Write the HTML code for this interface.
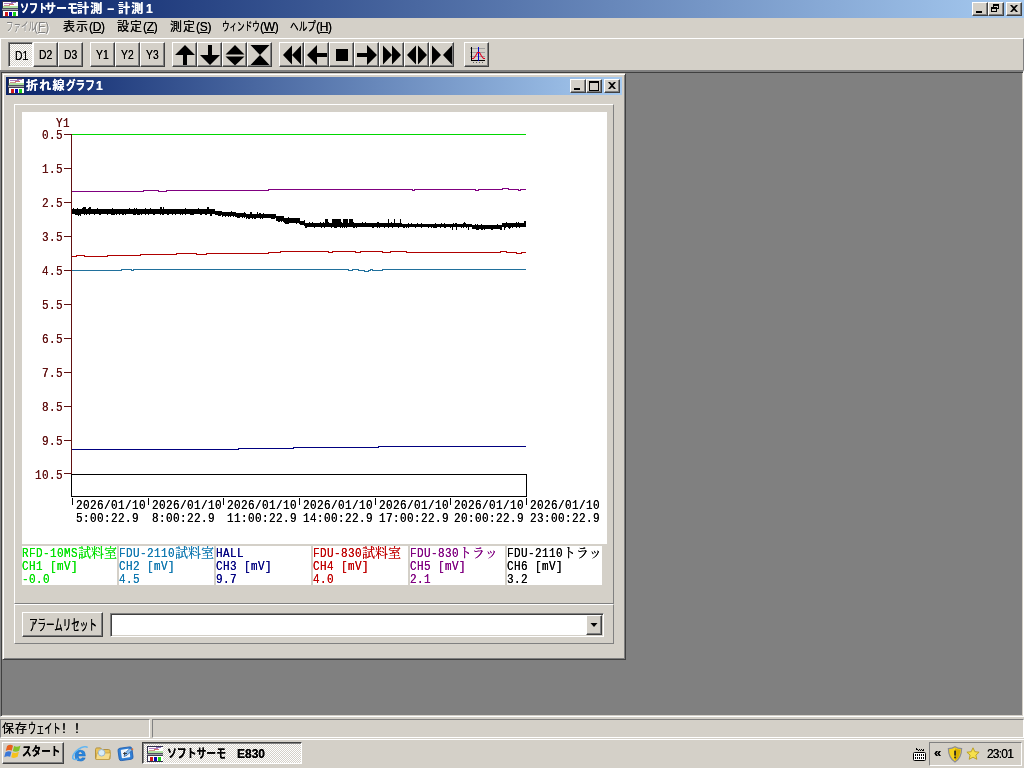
<!DOCTYPE html>
<html lang="ja">
<head>
<meta charset="utf-8">
<title>ソフトサーモ計測 − 計測1</title>
<style>
html,body{margin:0;padding:0}
body{width:1024px;height:768px;overflow:hidden;background:#d4d0c8;position:relative;color:#000;
 font-family:"Liberation Sans","Noto Sans CJK JP",sans-serif;font-size:12px;line-height:12px}
div,span{box-sizing:border-box}
.a{position:absolute;white-space:nowrap}
.ui,.mono{will-change:transform;text-shadow:0 0 0 currentColor}
.ui{font-family:"Liberation Sans","Noto Sans CJK JP",sans-serif;font-size:12px;line-height:14px}
.cap{background:linear-gradient(to right,#0a246a 0%,#a6caf0 100%);color:#fff;font-weight:bold}
.raised{background:#d4d0c8;border:1px solid;border-color:#fff #404040 #404040 #fff;box-shadow:inset -1px -1px 0 #808080,inset 1px 1px 0 #d4d0c8}
.tbtn{background:#d4d0c8;border:1px solid;border-color:#fff #404040 #404040 #fff;box-shadow:inset -1px -1px 0 #808080}
.sunk{border:1px solid;border-color:#808080 #fff #fff #808080;box-shadow:inset 1px 1px 0 #404040,inset -1px -1px 0 #d4d0c8}
.dither{background-color:#fff;background-image:linear-gradient(45deg,#d4d0c8 25%,transparent 25%,transparent 75%,#d4d0c8 75%),linear-gradient(45deg,#d4d0c8 25%,transparent 25%,transparent 75%,#d4d0c8 75%);background-size:2px 2px;background-position:0 0,1px 1px}
.mono{font-family:"Liberation Mono","Noto Serif CJK JP","Noto Serif CJK SC",monospace;font-size:11px;line-height:10.8333px;letter-spacing:0.4px;transform:scaleY(1.2);transform-origin:0 0}
.mono b{font-weight:normal;letter-spacing:0;font-size:13px;line-height:0;display:inline-block;transform:scaleY(.8333);transform-origin:0 50%;position:relative;top:1px}
u{text-decoration:underline}
.sx{display:inline-block;transform-origin:0 50%}
.tt{color:#fff;font-weight:bold}
.par{letter-spacing:-0.3px}
svg{position:absolute;left:0;top:0;overflow:visible}
</style>
</head>
<body>

<!-- ===== main title bar ===== -->
<div class="a cap" style="left:0;top:0;width:1024px;height:18px"></div>
<svg class="a" style="left:2px;top:1px" width="16" height="16" viewBox="0 0 16 16" shape-rendering="crispEdges">
 <g><rect x="0" y="0" width="16" height="16" fill="#30304c"/>
 <rect x="1" y="1" width="15" height="6" fill="#fff"/>
 <rect x="2" y="2" width="9" height="1" fill="#b080c0"/><rect x="9" y="1" width="5" height="1" fill="#9070c0"/>
 <rect x="2" y="4" width="6" height="1" fill="#d09090"/><rect x="7" y="3" width="5" height="1" fill="#d07070"/>
 <rect x="1" y="5" width="15" height="2" fill="#b0e0a0"/>
 <rect x="0" y="7" width="16" height="1" fill="#505060"/>
 <rect x="0" y="8" width="16" height="1" fill="#a0a0a8"/>
 <rect x="0" y="9" width="16" height="1" fill="#404050"/>
 <rect x="1" y="10" width="15" height="5" fill="#fff"/>
 <rect x="3" y="11" width="3" height="4" fill="#d01818"/>
 <rect x="7" y="11" width="3" height="4" fill="#0808b0"/>
 <rect x="11" y="11" width="3" height="4" fill="#18d018"/></g>
</svg>
<div class="a ui tt" style="left:20px;top:2px"><span class="sx" id="t1" style="transform:scaleX(.76)">ソフト</span><span class="a sx" id="t2" style="left:25px;transform:scaleX(.92)">サーモ</span><span class="a" id="t3" style="left:57px;letter-spacing:1.3px">計測</span><span class="a" id="t4" style="left:87px">−</span><span class="a" id="t5" style="left:98px;letter-spacing:1.3px">計測</span><span class="a" id="t6" style="left:126px">1</span></div>

<!-- caption buttons -->
<div class="a raised" style="left:972px;top:2px;width:16px;height:14px"></div>
<div class="a raised" style="left:988px;top:2px;width:16px;height:14px"></div>
<div class="a raised" style="left:1006px;top:2px;width:16px;height:14px"></div>
<svg width="1024" height="18" shape-rendering="crispEdges">
 <rect x="976" y="11" width="6" height="2" fill="#000"/>
 <path d="M993 4h6v2h-6zM993 6h1v2h-1zM998 6h1v3h-1zM997 8h2v1h-2zM991 7h6v2h-6zM991 9h1v3h-1zM996 9h1v3h-1zM991 11h6v1h-6z" fill="#000"/>
 <path d="M1010 5h2l2 2 2-2h2l-3 3.5 3 3.5h-2l-2-2-2 2h-2l3-3.5z" fill="#000" shape-rendering="auto"/>
</svg>

<!-- ===== menu bar ===== -->
<div class="a ui" style="left:6px;top:20px;color:#808080;text-shadow:1px 1px 0 #fff"><span class="sx" id="m1" style="transform:scaleX(.62)">ファイル</span><span class="a" id="m1b" style="left:28px">(<u>F</u>)</span></div>
<div class="a ui" style="left:63px;top:20px;letter-spacing:1px" id="m2">表示<span class="par">(<u>D</u>)</span></div>
<div class="a ui" style="left:117px;top:20px;letter-spacing:1px" id="m3">設定<span class="par">(<u>Z</u>)</span></div>
<div class="a ui" style="left:170px;top:20px;letter-spacing:1px" id="m4">測定<span class="par">(<u>S</u>)</span></div>
<div class="a ui" style="left:222px;top:20px"><span class="sx" id="m5" style="transform:scaleX(.63)">ウィンドウ</span><span class="a par" id="m5b" style="left:38px">(<u>W</u>)</span></div>
<div class="a ui" style="left:290px;top:20px"><span class="sx" id="m6" style="transform:scaleX(.72)">ヘルプ</span><span class="a par" id="m6b" style="left:26px">(<u>H</u>)</span></div>

<!-- ===== toolbar ===== -->
<div class="a" style="left:0;top:38px;width:1024px;height:32px;border-top:1px solid #fff;border-left:1px solid #fff;border-right:1px solid #808080"></div>
<!--TB0-->
<div class="a dither" style="left:8px;top:42px;width:25px;height:25px;border:1px solid;border-color:#808080 #fff #fff #808080;box-shadow:inset 1px 1px 0 #404040"></div>
<div class="a ui" style="left:9px;top:49px;width:25px;text-align:center"><span class="sx" style="transform:scaleX(.86);transform-origin:50% 50%">D1</span></div>
<div class="a tbtn" style="left:33px;top:42px;width:25px;height:25px"></div>
<div class="a ui" style="left:34px;top:48px;width:24px;text-align:center"><span class="sx" style="transform:scaleX(.86);transform-origin:50% 50%">D2</span></div>
<div class="a tbtn" style="left:58px;top:42px;width:25px;height:25px"></div>
<div class="a ui" style="left:59px;top:48px;width:24px;text-align:center"><span class="sx" style="transform:scaleX(.86);transform-origin:50% 50%">D3</span></div>
<div class="a tbtn" style="left:90px;top:42px;width:25px;height:25px"></div>
<div class="a ui" style="left:90px;top:48px;width:24px;text-align:center"><span class="sx" style="transform:scaleX(.86);transform-origin:50% 50%">Y1</span></div>
<div class="a tbtn" style="left:115px;top:42px;width:25px;height:25px"></div>
<div class="a ui" style="left:115px;top:48px;width:24px;text-align:center"><span class="sx" style="transform:scaleX(.86);transform-origin:50% 50%">Y2</span></div>
<div class="a tbtn" style="left:140px;top:42px;width:25px;height:25px"></div>
<div class="a ui" style="left:140px;top:48px;width:24px;text-align:center"><span class="sx" style="transform:scaleX(.86);transform-origin:50% 50%">Y3</span></div>
<div class="a tbtn" style="left:172px;top:42px;width:25px;height:25px"></div>
<div class="a tbtn" style="left:197px;top:42px;width:25px;height:25px"></div>
<div class="a tbtn" style="left:222px;top:42px;width:25px;height:25px"></div>
<div class="a tbtn" style="left:247px;top:42px;width:25px;height:25px"></div>
<div class="a tbtn" style="left:279px;top:42px;width:25px;height:25px"></div>
<div class="a tbtn" style="left:304px;top:42px;width:25px;height:25px"></div>
<div class="a tbtn" style="left:329px;top:42px;width:25px;height:25px"></div>
<div class="a tbtn" style="left:354px;top:42px;width:25px;height:25px"></div>
<div class="a tbtn" style="left:379px;top:42px;width:25px;height:25px"></div>
<div class="a tbtn" style="left:404px;top:42px;width:25px;height:25px"></div>
<div class="a tbtn" style="left:429px;top:42px;width:25px;height:25px"></div>
<div class="a tbtn" style="left:464px;top:42px;width:25px;height:25px"></div>
<svg width="1024" height="70">
<path d="M185 45L195 55H187V65H183V55H175Z" fill="#000"/>
<path d="M210 65L220 55H212V45H208V55H200Z" fill="#000"/>
<path d="M235 45L244.5 54.5H225.5Z M235 65.5L244.5 56.5H225.5Z" fill="#000"/>
<path d="M250.5 45H269.5L260 55L269.5 65H250.5L260 55Z" fill="#000"/>
<path d="M283 55L292 45.5V64.5ZM292 55L301 45.5V64.5Z" fill="#000"/>
<path d="M307 55L317 45V53H327V57H317V65Z" fill="#000"/>
<path d="M336 49H348V61H336Z" fill="#000"/>
<path d="M377 55L367 45V53H357V57H367V65Z" fill="#000"/>
<path d="M392 55L383 45.5V64.5ZM401 55L392 45.5V64.5Z" fill="#000"/>
<path d="M407 55L416 45.5V64.5ZM427 55L418 45.5V64.5Z" fill="#000"/>
<path d="M441 55L432 45.5V64.5ZM443 55L452 45.5V64.5Z" fill="#000"/>
<g shape-rendering="crispEdges">
<rect x="470" y="48" width="15" height="1" fill="#a0a0a0"/>
<rect x="470" y="52" width="15" height="1" fill="#a0a0a0"/>
<rect x="470" y="56" width="15" height="1" fill="#a0a0a0"/>
<rect x="471" y="47" width="1" height="14" fill="#000"/>
<rect x="471" y="60" width="14" height="1" fill="#000"/>
<rect x="473" y="62" width="1" height="1" fill="#606060"/>
<rect x="476" y="62" width="1" height="1" fill="#606060"/>
<rect x="479" y="62" width="1" height="1" fill="#606060"/>
<rect x="482" y="62" width="1" height="1" fill="#606060"/>
<rect x="478" y="47" width="1" height="14" fill="#0000d0"/>
</g>
<path d="M472 58.5H473.5L475.5 56L477.5 52.5H479.5L481.5 56L483.5 58.5H485" fill="none" stroke="#e00020" stroke-width="1.1"/>
</svg>
<!--TB1-->

<!-- ===== MDI client ===== -->
<div class="a" style="left:0;top:70px;width:1024px;height:647px;background:#808080;border-style:solid;border-width:2px 1px 1px 1px;border-color:#808080 #fff #fff #808080;box-shadow:inset 1px 1px 0 #404040,inset -1px -1px 0 #d4d0c8"></div>
<!--CH0-->
<div class="a" style="left:2px;top:73px;width:624px;height:587px;background:#d4d0c8;border:1px solid;border-color:#d4d0c8 #404040 #404040 #d4d0c8;box-shadow:inset 1px 1px 0 #fff,inset -1px -1px 0 #808080"></div>
<div class="a cap" style="left:6px;top:77px;width:616px;height:18px"></div>
<svg class="a" style="left:8px;top:78px" width="16" height="16" viewBox="0 0 16 16" shape-rendering="crispEdges"><g><rect x="0" y="0" width="16" height="16" fill="#30304c"/>
 <rect x="1" y="1" width="15" height="6" fill="#fff"/>
 <rect x="2" y="2" width="9" height="1" fill="#b080c0"/><rect x="9" y="1" width="5" height="1" fill="#9070c0"/>
 <rect x="2" y="4" width="6" height="1" fill="#d09090"/><rect x="7" y="3" width="5" height="1" fill="#d07070"/>
 <rect x="1" y="5" width="15" height="2" fill="#b0e0a0"/>
 <rect x="0" y="7" width="16" height="1" fill="#505060"/>
 <rect x="0" y="8" width="16" height="1" fill="#a0a0a8"/>
 <rect x="0" y="9" width="16" height="1" fill="#404050"/>
 <rect x="1" y="10" width="15" height="5" fill="#fff"/>
 <rect x="3" y="11" width="3" height="4" fill="#d01818"/>
 <rect x="7" y="11" width="3" height="4" fill="#0808b0"/>
 <rect x="11" y="11" width="3" height="4" fill="#18d018"/></g></svg>
<div class="a ui tt" style="left:26px;top:79px"><span id="c1" style="letter-spacing:1.3px">折れ線</span><span class="a sx" id="c2" style="left:40px;transform:scaleX(.8)">グラフ</span><span class="a" id="c3" style="left:70px">1</span></div>
<div class="a raised" style="left:570px;top:79px;width:16px;height:14px"></div>
<div class="a raised" style="left:586px;top:79px;width:16px;height:14px"></div>
<div class="a raised" style="left:604px;top:79px;width:16px;height:14px"></div>
<svg width="1024" height="100" shape-rendering="crispEdges"><rect x="574" y="88" width="6" height="2" fill="#000"/><path d="M589 81h10v10h-10zM590 83v7h8v-7z" fill="#000" fill-rule="evenodd"/><path d="M608 82h2l2 2 2-2h2l-3 3.5 3 3.5h-2l-2-2-2 2h-2l3-3.5z" fill="#000" shape-rendering="auto"/></svg>
<div class="a" style="left:14px;top:104px;width:600px;height:500px;border:1px solid;border-color:#fff #808080 #808080 #fff"></div>
<div class="a" style="left:14px;top:604px;width:600px;height:40px;border:1px solid;border-color:#fff #808080 #808080 #fff"></div>
<div class="a" style="left:22px;top:112px;width:585px;height:432px;background:#fff"></div>
<svg width="1024" height="768" shape-rendering="crispEdges">
<rect x="71" y="134" width="1" height="340" fill="#601010"/>
<rect x="64" y="134" width="7" height="1" fill="#601010"/>
<rect x="64" y="168" width="7" height="1" fill="#601010"/>
<rect x="64" y="202" width="7" height="1" fill="#601010"/>
<rect x="64" y="236" width="7" height="1" fill="#601010"/>
<rect x="64" y="270" width="7" height="1" fill="#601010"/>
<rect x="64" y="304" width="7" height="1" fill="#601010"/>
<rect x="64" y="338" width="7" height="1" fill="#601010"/>
<rect x="64" y="372" width="7" height="1" fill="#601010"/>
<rect x="64" y="406" width="7" height="1" fill="#601010"/>
<rect x="64" y="440" width="7" height="1" fill="#601010"/>
<rect x="64" y="473" width="7" height="1" fill="#601010"/>
<path d="M71.5 474.5H526.5V496.5H71.5Z" fill="none" stroke="#000" stroke-width="1"/>
<rect x="72" y="498" width="1" height="7" fill="#000"/>
<rect x="148" y="498" width="1" height="7" fill="#000"/>
<rect x="223" y="498" width="1" height="7" fill="#000"/>
<rect x="299" y="498" width="1" height="7" fill="#000"/>
<rect x="375" y="498" width="1" height="7" fill="#000"/>
<rect x="450" y="498" width="1" height="7" fill="#000"/>
<rect x="526" y="498" width="1" height="7" fill="#000"/>
<path d="M72 134.5H526" fill="none" stroke="#00d800" stroke-width="1"/>
<path d="M72 191.5H100V191.5H143V190.5H158V191.5H166V190.5H268V189.5H412V190.5H414V189.5H475V190.5H478V189.5H502V188.5H508V189.5H518V190.5H520V189.5H526" fill="none" stroke="#800080" stroke-width="1"/>
<path d="M72 256.5H76V255.5H84V256.5H107V255.5H140V254.5H176V253.5H196V254.5H206V253.5H268V252.5H280V251.5H328V252.5H332V251.5H355V252.5H360V251.5H382V252.5H390V251.5H406V252.5H500V251.5H506V252.5H516V253.5H521V252.5H526" fill="none" stroke="#b00000" stroke-width="1"/>
<path d="M72 270.5H121V269.5H131V270.5H133V269.5H348V270.5H352V269.5H358V270.5H364V271.5H368V270.5H370V269.5H372V270.5H382V269.5H526" fill="none" stroke="#20709c" stroke-width="1"/>
<path d="M72 449.5H150V449.5H238V448.5H293V447.5H378V446.5H526" fill="none" stroke="#000080" stroke-width="1"/>
<path d="M72.5 209V214M73.5 208V214M74.5 209V214M75.5 209V215M76.5 209V215M77.5 208V215M78.5 209V216M79.5 209V215M80.5 209V216M81.5 209V214M82.5 208V214M83.5 207V214M84.5 207V215M85.5 207V214M86.5 209V215M87.5 209V214M88.5 208V214M89.5 207V215M90.5 207V214M91.5 209V214M92.5 209V214M93.5 209V214M94.5 209V215M95.5 209V214M96.5 209V214M97.5 208V214M98.5 209V214M99.5 209V215M100.5 209V215M101.5 209V214M102.5 209V214M103.5 209V214M104.5 209V214M105.5 209V214M106.5 209V214M107.5 209V215M108.5 209V214M109.5 209V214M110.5 209V214M111.5 209V215M112.5 208V215M113.5 209V215M114.5 209V215M115.5 209V214M116.5 209V215M117.5 209V214M118.5 209V214M119.5 209V215M120.5 209V214M121.5 209V214M122.5 209V215M123.5 209V215M124.5 209V214M125.5 209V215M126.5 209V214M127.5 209V214M128.5 209V214M129.5 208V214M130.5 209V214M131.5 209V214M132.5 209V214M133.5 209V215M134.5 208V215M135.5 209V215M136.5 208V214M137.5 209V215M138.5 209V215M139.5 209V215M140.5 209V214M141.5 209V215M142.5 209V214M143.5 209V214M144.5 209V214M145.5 208V215M146.5 209V214M147.5 209V214M148.5 209V215M149.5 209V214M150.5 208V214M151.5 209V214M152.5 209V214M153.5 209V215M154.5 209V215M155.5 209V214M156.5 209V214M157.5 209V214M158.5 209V214M159.5 209V214M160.5 207V215M161.5 207V214M162.5 209V215M163.5 207V215M164.5 209V214M165.5 209V214M166.5 209V214M167.5 209V215M168.5 209V215M169.5 209V214M170.5 209V214M171.5 209V214M172.5 209V215M173.5 209V214M174.5 209V214M175.5 209V215M176.5 209V214M177.5 209V214M178.5 209V214M179.5 209V214M180.5 209V215M181.5 209V214M182.5 209V215M183.5 209V214M184.5 209V214M185.5 208V215M186.5 209V214M187.5 209V214M188.5 209V214M189.5 209V214M190.5 209V215M191.5 209V215M192.5 209V215M193.5 209V215M194.5 209V214M195.5 209V214M196.5 209V214M197.5 209V214M198.5 208V214M199.5 209V214M200.5 209V215M201.5 209V215M202.5 209V214M203.5 209V214M204.5 209V214M205.5 209V215M206.5 209V215M207.5 207V214M208.5 207V214M209.5 209V214M210.5 209V216M211.5 209V216M212.5 209V214M213.5 209V214M214.5 209V214M215.5 211V215M216.5 211V215M217.5 211V215M218.5 211V216M219.5 211V216M220.5 211V216M221.5 211V215M222.5 212V217M223.5 212V216M224.5 212V216M225.5 212V217M226.5 212V216M227.5 212V216M228.5 212V217M229.5 212V216M230.5 212V217M231.5 211V216M232.5 212V216M233.5 212V217M234.5 212V216M235.5 212V217M236.5 213V217M237.5 213V218M238.5 213V218M239.5 213V218M240.5 213V217M241.5 213V217M242.5 213V218M243.5 213V217M244.5 212V218M245.5 213V217M246.5 214V219M247.5 214V218M248.5 214V219M249.5 214V219M250.5 212V218M251.5 212V218M252.5 214V219M253.5 214V218M254.5 214V219M255.5 214V219M256.5 214V218M257.5 212V218M258.5 214V218M259.5 213V218M260.5 213V219M261.5 214V218M262.5 214V219M263.5 213V218M264.5 214V218M265.5 214V218M266.5 214V218M267.5 214V218M268.5 214V218M269.5 214V218M270.5 214V218M271.5 214V219M272.5 214V219M273.5 214V219M274.5 214V219M275.5 214V218M276.5 216V221M277.5 216V221M278.5 216V222M279.5 216V222M280.5 216V221M281.5 216V222M282.5 216V221M283.5 216V222M284.5 218V223M285.5 218V224M286.5 218V224M287.5 218V224M288.5 217V224M289.5 218V223M290.5 218V223M291.5 218V223M292.5 218V223M293.5 218V223M294.5 218V223M295.5 218V223M296.5 218V224M297.5 218V223M298.5 218V223M299.5 218V224M300.5 221V225M301.5 221V225M302.5 221V225M303.5 221V225M304.5 220V226M305.5 223V228M306.5 223V228M307.5 223V227M308.5 223V227M309.5 222V227M310.5 223V227M311.5 223V227M312.5 222V227M313.5 223V227M314.5 223V228M315.5 223V227M316.5 223V227M317.5 223V227M318.5 223V227M319.5 223V227M320.5 222V227M321.5 223V228M322.5 223V227M323.5 222V227M324.5 223V228M325.5 219V227M326.5 219V227M327.5 219V227M328.5 222V227M329.5 223V227M330.5 223V227M331.5 223V228M332.5 219V227M333.5 219V227M334.5 219V228M335.5 219V228M336.5 219V228M337.5 219V227M338.5 219V227M339.5 219V227M340.5 219V228M341.5 222V227M342.5 223V228M343.5 219V227M344.5 219V228M345.5 219V227M346.5 219V228M347.5 219V227M348.5 223V227M349.5 219V227M350.5 219V227M351.5 219V227M352.5 219V227M353.5 222V228M354.5 223V228M355.5 223V227M356.5 223V228M357.5 223V227M358.5 223V227M359.5 223V227M360.5 223V227M361.5 223V227M362.5 222V227M363.5 223V227M364.5 223V227M365.5 222V227M366.5 223V227M367.5 223V227M368.5 223V227M369.5 223V227M370.5 223V227M371.5 223V227M372.5 223V228M373.5 223V228M374.5 223V227M375.5 223V227M376.5 223V227M377.5 222V228M378.5 222V227M379.5 223V228M380.5 223V227M381.5 223V227M382.5 223V227M383.5 223V227M384.5 223V228M385.5 223V227M386.5 223V227M387.5 223V227M388.5 219V228M389.5 223V227M390.5 223V227M391.5 222V227M392.5 223V228M393.5 223V227M394.5 219V227M395.5 223V227M396.5 223V227M397.5 223V227M398.5 223V228M399.5 223V227M400.5 219V227M401.5 223V227M402.5 224V227M403.5 224V228M404.5 224V228M405.5 224V227M406.5 224V228M407.5 224V227M408.5 223V228M409.5 224V227M410.5 224V227M411.5 223V227M412.5 224V227M413.5 224V227M414.5 224V227M415.5 224V228M416.5 224V227M417.5 223V227M418.5 224V227M419.5 224V227M420.5 224V227M421.5 223V228M422.5 224V227M423.5 224V227M424.5 224V227M425.5 224V227M426.5 224V227M427.5 224V227M428.5 224V228M429.5 224V227M430.5 224V227M431.5 224V228M432.5 224V227M433.5 224V228M434.5 224V228M435.5 223V228M436.5 224V228M437.5 224V227M438.5 224V227M439.5 224V227M440.5 224V228M441.5 223V227M442.5 224V227M443.5 224V227M444.5 223V228M445.5 224V228M446.5 224V227M447.5 224V227M448.5 224V227M449.5 224V227M450.5 224V228M451.5 224V227M452.5 224V230M453.5 223V227M454.5 224V227M455.5 223V227M456.5 223V230M457.5 224V227M458.5 224V227M459.5 224V227M460.5 224V227M461.5 224V228M462.5 224V227M463.5 223V228M464.5 222V227M465.5 223V227M466.5 224V228M467.5 224V227M468.5 224V230M469.5 224V227M470.5 224V227M471.5 224V227M472.5 225V229M473.5 225V229M474.5 225V229M475.5 224V229M476.5 225V230M477.5 224V230M478.5 225V230M479.5 225V229M480.5 225V229M481.5 224V230M482.5 225V230M483.5 225V229M484.5 225V230M485.5 225V229M486.5 225V229M487.5 225V229M488.5 225V229M489.5 225V229M490.5 225V229M491.5 225V230M492.5 225V230M493.5 225V229M494.5 225V229M495.5 225V229M496.5 225V229M497.5 224V229M498.5 225V229M499.5 225V229M500.5 225V230M501.5 225V230M502.5 223V227M503.5 223V227M504.5 223V230M505.5 223V228M506.5 222V227M507.5 223V227M508.5 223V228M509.5 223V229M510.5 223V228M511.5 223V227M512.5 223V228M513.5 223V227M514.5 223V227M515.5 223V227M516.5 222V228M517.5 223V227M518.5 222V227M519.5 223V228M520.5 223V227M521.5 223V227M522.5 223V227M523.5 223V227M524.5 221V227M525.5 221V227" fill="none" stroke="#000" stroke-width="1"/>
</svg>
<div class="a mono" style="left:56px;top:117px;color:#601010">Y1</div>
<div class="a mono" style="left:22px;width:41px;text-align:right;top:129px;color:#601010">0.5</div>
<div class="a mono" style="left:22px;width:41px;text-align:right;top:163px;color:#601010">1.5</div>
<div class="a mono" style="left:22px;width:41px;text-align:right;top:197px;color:#601010">2.5</div>
<div class="a mono" style="left:22px;width:41px;text-align:right;top:231px;color:#601010">3.5</div>
<div class="a mono" style="left:22px;width:41px;text-align:right;top:265px;color:#601010">4.5</div>
<div class="a mono" style="left:22px;width:41px;text-align:right;top:299px;color:#601010">5.5</div>
<div class="a mono" style="left:22px;width:41px;text-align:right;top:333px;color:#601010">6.5</div>
<div class="a mono" style="left:22px;width:41px;text-align:right;top:367px;color:#601010">7.5</div>
<div class="a mono" style="left:22px;width:41px;text-align:right;top:401px;color:#601010">8.5</div>
<div class="a mono" style="left:22px;width:41px;text-align:right;top:435px;color:#601010">9.5</div>
<div class="a mono" style="left:22px;width:41px;text-align:right;top:469px;color:#601010">10.5</div>
<div class="a mono" style="left:76px;top:499px">2026/01/10<br>5:00:22.9</div>
<div class="a mono" style="left:152px;top:499px">2026/01/10<br>8:00:22.9</div>
<div class="a mono" style="left:227px;top:499px">2026/01/10<br>11:00:22.9</div>
<div class="a mono" style="left:303px;top:499px">2026/01/10<br>14:00:22.9</div>
<div class="a mono" style="left:379px;top:499px">2026/01/10<br>17:00:22.9</div>
<div class="a mono" style="left:454px;top:499px">2026/01/10<br>20:00:22.9</div>
<div class="a mono" style="left:530px;top:499px">2026/01/10<br>23:00:22.9</div>
<div class="a" style="left:22px;top:546px;width:95px;height:39px;background:#fff;overflow:hidden"><div class="a mono" style="left:0;top:1px;color:#00e000">RFD-10MS<b>試料室</b><br>CH1 [mV]<br>-0.0</div></div>
<div class="a" style="left:119px;top:546px;width:95px;height:39px;background:#fff;overflow:hidden"><div class="a mono" style="left:0;top:1px;color:#1078b0">FDU-2110<b>試料室</b><br>CH2 [mV]<br>4.5</div></div>
<div class="a" style="left:216px;top:546px;width:95px;height:39px;background:#fff;overflow:hidden"><div class="a mono" style="left:0;top:1px;color:#000080">HALL<br>CH3 [mV]<br>9.7</div></div>
<div class="a" style="left:313px;top:546px;width:95px;height:39px;background:#fff;overflow:hidden"><div class="a mono" style="left:0;top:1px;color:#c00000">FDU-830<b>試料室</b><br>CH4 [mV]<br>4.0</div></div>
<div class="a" style="left:410px;top:546px;width:95px;height:39px;background:#fff;overflow:hidden"><div class="a mono" style="left:0;top:1px;color:#800080">FDU-830<b>トラッ</b><br>CH5 [mV]<br>2.1</div></div>
<div class="a" style="left:507px;top:546px;width:95px;height:39px;background:#fff;overflow:hidden"><div class="a mono" style="left:0;top:1px;color:#000000">FDU-2110<b>トラッ</b><br>CH6 [mV]<br>3.2</div></div>
<div class="a raised" style="left:22px;top:612px;width:81px;height:25px"></div>
<div class="a ui" style="left:29px;top:618px"><span class="sx" id="al" style="transform:scale(.71,1.2)">アラームリセット</span></div>
<div class="a sunk" style="left:110px;top:613px;width:494px;height:24px;background:#fff"></div>
<div class="a raised" style="left:586px;top:615px;width:16px;height:20px"></div>
<svg width="1024" height="768"><path d="M590.5 623h7l-3.5 4z" fill="#000"/></svg>
<!--CH1-->

<!-- ===== status bar ===== -->
<!--ST0-->
<div class="a" style="left:0;top:719px;width:150px;height:19px;border:1px solid;border-color:#808080 #fff #fff #808080"></div>
<div class="a" style="left:152px;top:719px;width:872px;height:19px;border:1px solid;border-color:#808080 #fff #fff #808080"></div>
<div class="a ui" style="left:2px;top:722px"><span id="s1" style="letter-spacing:1px">保存</span><span class="a sx" id="s2" style="left:26px;transform:scale(.68,1.1)">ウェイト</span><span class="a" id="s3" style="left:56px;letter-spacing:1px">！！</span></div>
<!--ST1-->

<!-- ===== taskbar ===== -->
<!--TK0-->
<div class="a" style="left:0;top:738px;width:1024px;height:30px;background:#d4d0c8;border-top:1px solid #d4d0c8;box-shadow:inset 0 1px 0 #fff"></div>
<div class="a raised" style="left:2px;top:742px;width:62px;height:22px"></div>
<svg class="a" style="left:4px;top:744px" width="17" height="15" viewBox="-0.600 0.400 15.500 13.500">
<path d="M2.2 2.2C4 .8 6 .8 7.6 1.8L6.4 6.4C4.8 5.6 3 5.6 1 6.8Z" fill="#e8601c"/>
<path d="M8.6 2.2C10.4 3.2 12.4 3 14.4 1.6L13.2 6.4C11.4 7.6 9.2 7.8 7.4 6.8Z" fill="#84c225"/>
<path d="M.8 7.8C2.8 6.6 4.6 6.6 6.2 7.4L5 12C3.4 11.2 1.6 11.2-.4 12.4Z" fill="#3a78d8"/>
<path d="M7.2 7.8C9 8.8 11 8.6 13 7.4L11.8 12C9.8 13.2 7.8 13.4 6 12.4Z" fill="#f6c21c"/>
</svg>
<div class="a ui" style="left:22px;top:745px;font-weight:bold"><span class="sx" id="st" style="transform:scaleX(.8)">スタート</span></div>
<svg class="a" style="left:71px;top:745px" width="18" height="17" viewBox="0 0 18 17">
<text x="9" y="15.800" text-anchor="middle" font-family="Liberation Sans, sans-serif" font-weight="bold" font-size="21" fill="#2a86dc" stroke="#1e74cc" stroke-width=".7">e</text>
<path d="M2.2 13.800C.6 11.600 3 7.200 7.600 4.200 11.800 1.500 15.600 1.200 16.600 2.600" fill="none" stroke="#62b6f2" stroke-width="1.500"/>
<path d="M1.600 13.200c1 1.600 3.600 1.400 5.400.6" fill="none" stroke="#62b6f2" stroke-width="1.300"/>
</svg>
<svg class="a" style="left:94px;top:746px" width="18" height="16" viewBox="0 0 18 16">
<path d="M1.5 3.5c0-1 .6-1.6 1.6-1.6h3.4l1.4 1.6h6.6c1 0 1.6.6 1.6 1.6v6.8c0 1-.6 1.6-1.6 1.6H3.100c-1 0-1.6-.6-1.6-1.600z" fill="#e8c25a" stroke="#a8842c" stroke-width=".8"/>
<path d="M3 7h13.600l-1.600 6.500H1.800z" fill="#f6dc8c" stroke="#b8943c" stroke-width=".6"/>
<circle cx="7.600" cy="6.800" r="3.300" fill="#d8ecf8" stroke="#9cb8d0" stroke-width="1"/>
</svg>
<svg class="a" style="left:117px;top:745px" width="18" height="17" viewBox="0 0 18 17">
<rect x="1.500" y="2.500" width="14" height="12.500" rx="2.200" fill="#2f7fd6" stroke="#1c5cb0" stroke-width=".8" transform="rotate(-8 8.5 8.5)"/>
<rect x="4.200" y="4.200" width="8.600" height="8.600" rx="1" fill="#f2f6fa" transform="rotate(-8 8.5 8.5)"/>
<path d="M7 11.500l1-3.200 5-5 2 2-5 5z" fill="#8cc0f0" stroke="#2c5c9c" stroke-width=".7"/>
<path d="M6.500 8.500h3.500M6.500 8.500l1.600-1.400M6.500 8.500l1.600 1.400" stroke="#303030" stroke-width=".9" fill="none"/>
<circle cx="15.300" cy="4.200" r="1" fill="#e07030"/>
</svg>
<div class="a dither" style="left:142px;top:742px;width:160px;height:22px;border:1px solid;border-color:#404040 #fff #fff #404040;box-shadow:inset 1px 1px 0 #808080"></div>
<svg class="a" style="left:147px;top:746px" width="16" height="16" viewBox="0 0 16 16" shape-rendering="crispEdges"><g><rect x="0" y="0" width="16" height="16" fill="#30304c"/>
 <rect x="1" y="1" width="15" height="6" fill="#fff"/>
 <rect x="2" y="2" width="9" height="1" fill="#b080c0"/><rect x="9" y="1" width="5" height="1" fill="#9070c0"/>
 <rect x="2" y="4" width="6" height="1" fill="#d09090"/><rect x="7" y="3" width="5" height="1" fill="#d07070"/>
 <rect x="1" y="5" width="15" height="2" fill="#b0e0a0"/>
 <rect x="0" y="7" width="16" height="1" fill="#505060"/>
 <rect x="0" y="8" width="16" height="1" fill="#a0a0a8"/>
 <rect x="0" y="9" width="16" height="1" fill="#404050"/>
 <rect x="1" y="10" width="15" height="5" fill="#fff"/>
 <rect x="3" y="11" width="3" height="4" fill="#d01818"/>
 <rect x="7" y="11" width="3" height="4" fill="#0808b0"/>
 <rect x="11" y="11" width="3" height="4" fill="#18d018"/></g></svg>
<div class="a ui" style="left:167px;top:747px;font-weight:bold"><span class="sx" id="k1" style="transform:scaleX(.82)">ソフトサーモ</span><span class="a" id="k2" style="left:70px">E830</span></div>
<svg class="a" style="left:912px;top:747px" width="15" height="15" viewBox="0 0 15 15" shape-rendering="crispEdges">
<path d="M4 1h1v2h-1zM5 2h1v1h-1zM6 3h1v1h-1zM7 2h1v1h-1zM8 3h1v1h-1zM9 2h1v1h-1zM10 3h1v1h-1zM11 2h1v2h-1z" fill="#000"/>
<rect x="1.500" y="5.500" width="12" height="8" rx="1" fill="#fff" stroke="#000" stroke-width="1" shape-rendering="auto"/>
<path d="M3 7h1v2h-1zM5 7h1v2h-1zM7 7h1v2h-1zM9 7h1v2h-1zM11 7h1v2h-1zM3 10h1v2h-1zM5 10h1v2h-1zM7 10h1v2h-1zM9 10h1v2h-1zM11 10h1v2h-1z" fill="#000"/>
</svg>
<div class="a" style="left:929px;top:742px;width:93px;height:24px;border:1px solid;border-color:#808080 #fff #fff #808080"></div>
<div class="a ui" style="left:934px;top:746px;font-weight:bold;font-size:13px">«</div>
<svg class="a" style="left:947px;top:746px" width="16" height="17" viewBox="0 0 16 17">
<path d="M8 .8c2.200 1.400 4.400 1.800 6.600 1.800 0 6-1.600 10.400-6.600 13.400C3 13 1.400 8.600 1.400 2.600 3.600 2.600 5.800 2.200 8 .8z" fill="#f4d21c" stroke="#8c8c94" stroke-width="1.200"/>
<path d="M8 2.200c1.600 1 3.400 1.400 5.200 1.500 0 4.800-1.400 8.300-5.200 10.800z" fill="#d8b000"/>
<rect x="7.200" y="4.600" width="1.700" height="5" fill="#222"/><rect x="7.200" y="10.600" width="1.700" height="1.700" fill="#222"/>
</svg>
<svg class="a" style="left:966px;top:747px" width="14" height="14" viewBox="0 0 14 14">
<path d="M7 .8l1.800 3.900 4.300.5-3.200 2.900.9 4.200L7 10.200l-3.800 2.100.9-4.200L.9 5.200l4.300-.5z" fill="#f6e04c" stroke="#b89c1c" stroke-width=".9"/>
</svg>
<div class="a ui" style="left:987px;top:747px;letter-spacing:-0.8px" id="clk">23:01</div>
<!--TK1-->

</body>
</html>
